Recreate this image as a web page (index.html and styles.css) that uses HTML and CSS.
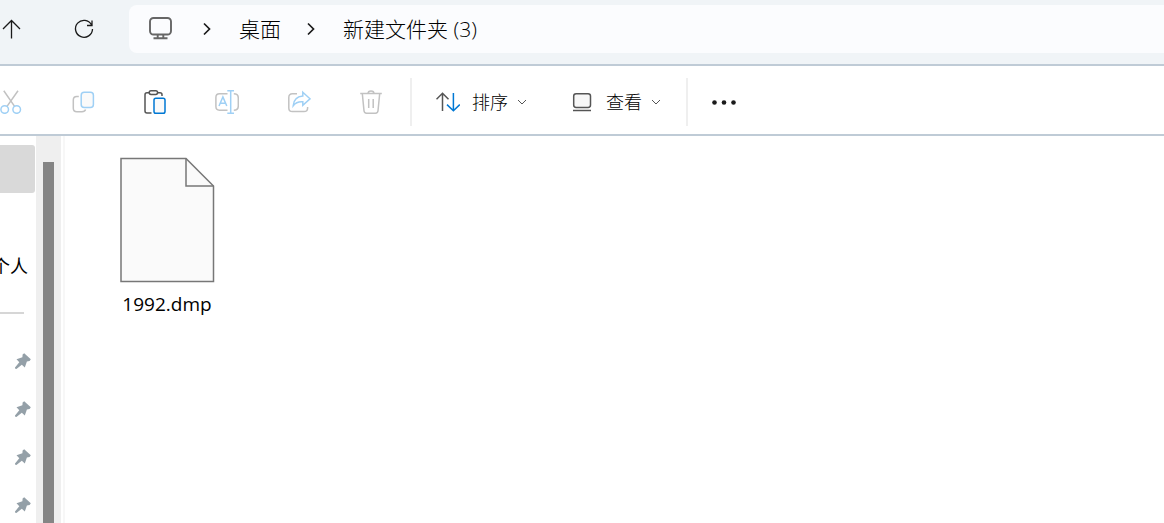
FILE: index.html
```
<!DOCTYPE html>
<html lang="zh-CN">
<head>
<meta charset="utf-8">
<title>新建文件夹 (3)</title>
<link rel="stylesheet" href="styles.css">
</head>
<body>
	<div class="address">
		<button class="nav" aria-label="向上">
			<svg width="22" height="22" viewBox="0 0 22 22"><path d="M11.5 20.5V2.5M3 11L11.5 2.5L20 11"/></svg>
		</button>
		<button class="nav" aria-label="刷新">
			<svg width="22" height="22" viewBox="0 0 22 22"><path d="M18.5 6.8A8.5 8.5 0 1 0 19.5 11M19 2.5V7.5H14"/></svg>
		</button>
		<nav class="path">
			<svg class="monitor" width="24" height="24" viewBox="0 0 24 24"><rect x="2" y="1" width="21" height="16.5" rx="3.5"/><path d="M9.7 17.5V21M15.3 17.5V21M5.5 21.3H19.5"/></svg>
			<svg class="arrow" width="8" height="14" viewBox="0 0 8 14"><path d="M1 1.5L6.5 7L1 12.5"/></svg>
			<a href="#">桌面</a>
			<svg class="arrow" width="8" height="14" viewBox="0 0 8 14"><path d="M1 1.5L6.5 7L1 12.5"/></svg>
			<a href="#">新建文件夹 (3)</a>
		</nav>
	</div>

	<div class="toolbar">
		<div class="tools">
			<button class="tool off" aria-label="剪切" disabled>
				<svg width="24" height="24" viewBox="0 0 24 24"><path d="M4.8 .7L15.6 16.4M19 .7L8 16.4"/><g class="blue"><circle cx="5.7" cy="19.5" r="3.8"/><circle cx="17.7" cy="19.5" r="3.8"/></g></svg>
			</button>
			<button class="tool off" aria-label="复制" disabled>
				<svg width="24" height="24" viewBox="0 0 24 24"><path d="M7.8 6.5H5.8Q2.3 6.5 2.3 10V18.2Q2.3 21.7 5.8 21.7H11Q13.8 21.7 14.6 19.5"/><rect class="blue" x="10.2" y="2.2" width="12.2" height="15.2" rx="3"/></svg>
			</button>
			<button class="tool" aria-label="粘贴">
				<svg width="24" height="24" viewBox="0 0 24 24"><path d="M6 2.7H4Q2 2.7 2 4.7V21Q2 23 4 23H8.5M14.8 2.7H17Q19 2.7 19 4.7V6"/><rect x="6.2" y=".8" width="8.4" height="3.6" rx="1.8"/><rect class="blue" x="11" y="8.2" width="11" height="15" rx="1.8"/></svg>
			</button>
			<button class="tool off" aria-label="重命名" disabled>
				<svg width="24" height="24" viewBox="0 0 24 24"><path d="M12.5 3.8H4.5Q.9 3.8 .9 7.4V16.6Q.9 20.2 4.5 20.2H12.5M18.8 3.8Q23.3 3.8 23.3 8V16Q23.3 20.2 18.8 20.2"/><path class="blue" d="M4 16L7.9 7L11.8 16M5.2 13.3H10.6M12.3 .8H19M15.7 .8V23.3M12.3 23.3H19"/></svg>
			</button>
			<button class="tool off" aria-label="共享" disabled>
				<svg width="24" height="24" viewBox="0 0 24 24"><path d="M10 3.8H5.4Q1.8 3.8 1.8 7.4V18Q1.8 21.6 5.4 21.6H17Q20.6 21.6 20.6 18V17"/><path class="blue" d="M15.8 2.2L23 8.8L15.8 15.4V11.8Q9.5 11.3 6.2 15.8Q6.7 6.8 15.8 6Z"/></svg>
			</button>
			<button class="tool off" aria-label="删除" disabled>
				<svg width="24" height="24" viewBox="0 0 24 24"><path d="M1.2 3.5H22.8M9 3.5Q9 .9 12 .9T15 3.5M3.3 3.5L5 20.8Q5.2 23.2 7.5 23.2H16.5Q18.8 23.2 19 20.8L20.7 3.5M9.7 9V18M14.2 9V18"/></svg>
			</button>
		</div>
		<button class="menu">
			<svg width="24" height="24" viewBox="0 0 24 24"><path d="M6.5 21V3.2M.5 9.2L6.5 3.2L12.5 9.2"/><path class="blue" d="M17.4 3V20.8M11 14.6L17.4 20.8L23.8 14.6"/></svg>
			<span>排序</span>
			<svg class="down" width="10" height="6" viewBox="0 0 10 6"><path d="M1 1L5 5L9 1"/></svg>
		</button>
		<button class="menu view">
			<svg width="24" height="24" viewBox="0 0 24 24"><rect x="3.7" y="3.7" width="16.8" height="13.8" rx="2.4"/><path d="M3 20.5H21"/></svg>
			<span>查看</span>
			<svg class="down" width="10" height="6" viewBox="0 0 10 6"><path d="M1 1L5 5L9 1"/></svg>
		</button>
		<button class="more" aria-label="更多">
			<svg width="24" height="6" viewBox="0 0 24 6"><circle cx="2.5" cy="3.5" r="2.3"/><circle cx="12" cy="3.5" r="2.3"/><circle cx="21.5" cy="3.5" r="2.3"/></svg>
		</button>
	</div>

	<div class="window">
		<div class="side">
			<a class="item active" href="#" aria-label="主文件夹"></a>
			<a class="item personal" href="#">个人</a>
			<div class="line"></div>
			<div class="item"><svg class="pin" width="16" height="16" viewBox="0 0 16 16"><path d="M9.2 .2L15.8 6.2L14.6 8L11.9 8.6L9.8 14.6L6.8 11.8L1.4 16L0 15.6V14.4L4.3 9.3L1.5 6.2L7.4 4.2L7.6 1.4Z"/></svg></div>
			<div class="item"><svg class="pin" width="16" height="16" viewBox="0 0 16 16"><path d="M9.2 .2L15.8 6.2L14.6 8L11.9 8.6L9.8 14.6L6.8 11.8L1.4 16L0 15.6V14.4L4.3 9.3L1.5 6.2L7.4 4.2L7.6 1.4Z"/></svg></div>
			<div class="item"><svg class="pin" width="16" height="16" viewBox="0 0 16 16"><path d="M9.2 .2L15.8 6.2L14.6 8L11.9 8.6L9.8 14.6L6.8 11.8L1.4 16L0 15.6V14.4L4.3 9.3L1.5 6.2L7.4 4.2L7.6 1.4Z"/></svg></div>
			<div class="item"><svg class="pin" width="16" height="16" viewBox="0 0 16 16"><path d="M9.2 .2L15.8 6.2L14.6 8L11.9 8.6L9.8 14.6L6.8 11.8L1.4 16L0 15.6V14.4L4.3 9.3L1.5 6.2L7.4 4.2L7.6 1.4Z"/></svg></div>
		</div>
		<div class="scroll"><div class="thumb"></div></div>
		<main class="files">
			<button class="file">
				<svg width="96" height="126" viewBox="0 0 96 126"><path d="M2 1.5H67L94.5 29V124.5H2Z"/><path class="fold" d="M67 1.5V29H94.5"/></svg>
				<span>1992.dmp</span>
			</button>
		</main>
	</div>
</body>
</html>
```
FILE: styles.css
```
* {box-sizing:border-box;}
body, button, a {font-family:"Open Sans", "Noto Sans CJK SC", sans-serif; color:#1a1a1a;}
body {margin:0; height:100vh; display:flex; flex-direction:column; overflow:hidden; background:#fff;}
button {padding:0; border:0; background:none; display:flex; align-items:center;}
a {text-decoration:none;}
svg {display:block; flex:none; fill:none; stroke:#555; stroke-width:1.5;}

.address {display:flex; flex:none; align-items:center; height:66px; padding-bottom:6px; background:#f0f4f7; border-bottom:2px solid #bfcbd6;}
.nav {width:22px; height:48px; margin-right:51px;}
.nav svg {stroke:#1a1a1a; stroke-width:1.3;}
.nav + .nav {margin-right:34px;}
.path {display:flex; flex:1; align-items:center; height:48px; padding-left:19px; background:#fbfcfe; border-radius:8px 0 0 8px; font-size:21px; line-height:30px; white-space:nowrap;}
.path a {margin:0 26px 0 28px; font-weight:300; color:#000;}
.monitor {margin-right:31px; stroke:#666; stroke-width:1.9;}
.arrow {stroke:#1a1a1a; stroke-width:1.7;}

.toolbar {display:flex; flex:none; align-items:center; height:70px; padding:12px 0 8px; border-bottom:2px solid #bfcbd6;}
.tools {display:flex; gap:50px; padding-right:28px; border-right:2px solid #efefef;}
.tool {width:22px; height:48px; justify-content:center;}
.tool rect {fill:#fafafa;}
.blue {stroke:#0078d4;}
.off svg {stroke:#c2c2c2;}
.off .blue {stroke:#9fd0f5;}
.menu {height:48px; padding-left:24px; font-size:18px; font-weight:300; line-height:24px; color:#000; white-space:nowrap;}
.menu span {margin:0 9px 0 12px;}
.menu rect {fill:#f7f7f7;}
.down {stroke-width:1;}
.view {padding:0 25px 0 43px; border-right:2px solid #efefef;}
.more {height:48px; padding-left:24px;}
.more svg {fill:#1a1a1a; stroke:none;}

.window {display:flex; flex:1; min-height:0;}
.side {flex:none; width:36px; padding-top:9px; overflow:hidden;}
.item {display:flex; align-items:center; justify-content:flex-end; height:48px; padding-right:5px; font-size:18px; color:#000; white-space:nowrap;}
.active {margin-right:1px; background:#d9d9d9; border-radius:0 3px 3px 0;}
.personal {margin-top:48px; padding-right:8px;}
.line {height:2px; margin:23px 12px 23px 0; background:#d6d6d6;}
.pin {fill:#94a0a8; stroke:none;}
.scroll {flex:none; width:25px; padding:26px 7px 0; background:#efefef;}
.thumb {height:100%; background:#858585;}
.files {flex:1; margin-left:2px; padding:21px 54px; border-left:2px solid #f7f7f7;}
.file {flex-direction:column; gap:9px; width:96px; font-size:19px; line-height:24px; color:#000;}
.file svg {fill:#fafafa; stroke:#777;}
.file .fold {fill:none;}
```
